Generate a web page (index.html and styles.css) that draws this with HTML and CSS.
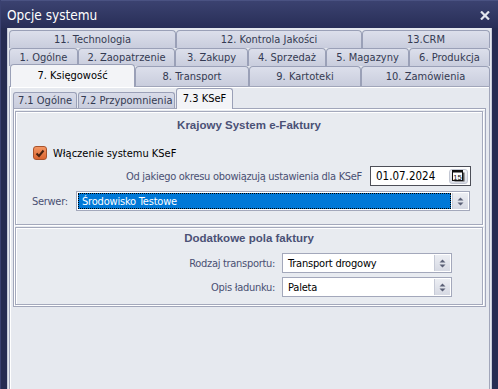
FILE: index.html
```html
<!DOCTYPE html>
<html lang="pl">
<head>
    <meta charset="UTF-8">
    <title>Opcje systemu</title>
    <link rel="stylesheet" href="styles.css">
</head>
<body>
    <div class="window">
        <div class="titlebar">
            <span class="title">Opcje systemu</span>
            <svg class="close" width="10" height="9" viewBox="0 0 10 9">
                <path d="M1 0.5 L9 8.5 M9 0.5 L1 8.5" stroke="#e2e5ee" stroke-width="2.2" />
            </svg>
        </div>

        <div class="client">
            <div class="tabrow row1">
                <div class="tab">11. Technologia</div>
                <div class="tab">12. Kontrola Jakości</div>
                <div class="tab">13.CRM</div>
            </div>
            <div class="tabrow row2">
                <div class="tab">1. Ogólne</div>
                <div class="tab">2. Zaopatrzenie</div>
                <div class="tab">3. Zakupy</div>
                <div class="tab">4. Sprzedaż</div>
                <div class="tab">5. Magazyny</div>
                <div class="tab">6. Produkcja</div>
            </div>
            <div class="tabrow row3">
                <div class="tab active">7. Księgowość</div>
                <div class="tab">8. Transport</div>
                <div class="tab">9. Kartoteki</div>
                <div class="tab">10. Zamówienia</div>
            </div>

            <div class="tabpage">
                <div class="subtabs">
                    <div class="subtab">7.1 Ogólne</div>
                    <div class="subtab">7.2 Przypomnienia</div>
                    <div class="subtab active">7.3 KSeF</div>
                </div>

                <div class="subpage">
                    <div class="group group-ksef">
                        <div class="group-title">Krajowy System e-Faktury</div>

                        <div class="check-row">
                            <span class="checkbox">
                                <svg width="10" height="9" viewBox="0 0 10 9">
                                    <path d="M1.5 4.5 L4 7 L8.5 1.5" fill="none" stroke="#4a2210" stroke-width="2" />
                                </svg>
                            </span>
                            <span>Włączenie systemu KSeF</span>
                        </div>

                        <div class="date-row">
                            <span class="label">Od jakiego okresu obowiązują ustawienia dla KSeF</span>
                            <div class="date-input">
                                <span class="date-value">01.07.2024</span>
                                <span class="cal-btn">
                                    <svg width="13" height="12" viewBox="0 0 13 12">
                                        <rect x="2.5" y="2.5" width="10" height="9" fill="#555" />
                                        <rect x="0.5" y="0.5" width="10" height="10" fill="#fff" stroke="#111" />
                                        <rect x="0.5" y="0.5" width="10" height="2" fill="#111" />
                                        <text x="5.5" y="9.6" font-size="7.5" font-family="Liberation Sans, sans-serif" text-anchor="middle" fill="#111">15</text>
                                    </svg>
                                </span>
                            </div>
                        </div>

                        <div class="server-row">
                            <span class="label">Serwer:</span>
                            <div class="combo focused">
                                <span class="value">Środowisko Testowe</span>
                                <span class="spin">
                                    <svg width="7" height="9" viewBox="0 0 7 9">
                                        <path d="M0.5 3.5 L3.5 0.5 L6.5 3.5 Z M0.5 5.5 L3.5 8.5 L6.5 5.5 Z" fill="#5a6076" />
                                    </svg>
                                </span>
                            </div>
                        </div>
                    </div>

                    <div class="group group-extra">
                        <div class="group-title">Dodatkowe pola faktury</div>
                        <div class="field-grid">
                            <span class="label">Rodzaj transportu:</span>
                            <div class="combo">
                                <span class="value">Transport drogowy</span>
                                <span class="spin">
                                    <svg width="7" height="9" viewBox="0 0 7 9">
                                        <path d="M0.5 3.5 L3.5 0.5 L6.5 3.5 Z M0.5 5.5 L3.5 8.5 L6.5 5.5 Z" fill="#5a6076" />
                                    </svg>
                                </span>
                            </div>
                            <span class="label">Opis ładunku:</span>
                            <div class="combo">
                                <span class="value">Paleta</span>
                                <span class="spin">
                                    <svg width="7" height="9" viewBox="0 0 7 9">
                                        <path d="M0.5 3.5 L3.5 0.5 L6.5 3.5 Z M0.5 5.5 L3.5 8.5 L6.5 5.5 Z" fill="#5a6076" />
                                    </svg>
                                </span>
                            </div>
                        </div>
                    </div>
                </div>
            </div>
        </div>
    </div>
</body>
</html>
```

FILE: styles.css
```css
body {
    margin: 0;
    width: 498px;
    height: 389px;
    overflow: hidden;
    background-color: #262c52;
    font-family: "DejaVu Sans Condensed", "DejaVu Sans", sans-serif;
    font-size: 11px;
    color: #000;
}
.window {
    height: 389px;
    display: flex;
    flex-direction: column;
    border-left: 1px solid #3a4170;
    box-sizing: border-box;
}
.titlebar {
    height: 28px;
    flex-shrink: 0;
    display: flex;
    align-items: center;
    justify-content: space-between;
    padding: 0 8px 0 6px;
    background: linear-gradient(#3b4270, #282e57);
    border-top: 1px solid #4a5282;
    box-sizing: border-box;
    color: #fff;
    font-size: 13.5px;
}
.close {
    margin-top: 1px;
}
.client {
    flex: 1;
    margin: 0 6px 0 6px;
    padding: 2px 1px 0 1px;
    background-color: #e5e8ee;
    border-left: 1px solid #c6cbda;
    border-right: 1px solid #c6cbda;
    display: flex;
    flex-direction: column;
    min-height: 0;
}

/* main tabs */
.tabrow {
    display: grid;
    height: 18px;
}
.row1 { grid-template-columns: 167px 186px 128px; }
.row2 { grid-template-columns: 69px 97px 73px 78px 83px 81px; }
.row3 { grid-template-columns: 126px 114px 112px 129px; height: 20px; }
.tab {
    border: 1px solid #9aa0b7;
    border-bottom: none;
    border-radius: 4px 4px 0 0;
    background: linear-gradient(#dcdfeb, #c9cddd);
    color: #343a52;
    text-align: center;
    line-height: 17px;
    white-space: nowrap;
    overflow: hidden;
}
.row3 .tab {
    line-height: 19px;
}
.row3 .tab.active {
    position: relative;
    z-index: 1;
    margin: -2px 0 -1px 1px;
    line-height: 22px;
    background: #f3f4f7;
    color: #000;
}
.tabpage {
    flex: 1;
    border: 1px solid #a1a6ba;
    border-bottom: none;
    box-shadow: inset 1px 1px 0 #fff;
    background-color: #e6e9ef;
    padding: 1px 3px 0 3px;
}

/* sub tabs */
.subtabs {
    display: flex;
    align-items: flex-end;
    height: 20px;
}
.subtab {
    height: 15px;
    line-height: 15px;
    margin-right: 1px;
    border: 1px solid #9aa0b7;
    border-bottom: none;
    border-radius: 3px 3px 0 0;
    background: linear-gradient(#d8dbe8, #c9cddd);
    color: #343a52;
    text-align: center;
    white-space: nowrap;
}
.subtab:nth-child(1) { width: 62px; }
.subtab:nth-child(2) { width: 95px; }
.subtab.active {
    position: relative;
    z-index: 1;
    width: 55px;
    height: 20px;
    line-height: 19px;
    margin-bottom: -1px;
    background: #f3f4f7;
    color: #000;
}
.subpage {
    border: 1px solid #a1a6ba;
    box-shadow: inset 1px 1px 0 #fff;
    background-color: #e8ebf0;
    padding: 2px 2px 1px 1px;
}

/* group boxes */
.group {
    border: 1px solid #a4a9bc;
    box-shadow: inset 1px 1px 0 #fff, 1px 1px 0 #fff;
    display: flex;
    flex-direction: column;
}
.group-title {
    height: 16px;
    line-height: 16px;
    text-align: center;
    font-family: "Liberation Sans", sans-serif;
    font-weight: bold;
    font-size: 11.5px;
    color: #4b5176;
}
.group-ksef {
    padding-bottom: 13px;
}
.group-ksef .group-title {
    margin-top: 5px;
}
.group-extra {
    margin-top: 2px;
    padding-bottom: 7px;
}
.group-extra .group-title {
    margin-top: 2px;
}
.label {
    color: #4a5073;
    letter-spacing: -0.3px;
}
.check-row {
    display: flex;
    align-items: center;
    gap: 6px;
    height: 16px;
    margin-top: 12px;
    padding-left: 17px;
}
.checkbox {
    width: 14px;
    height: 14px;
    box-sizing: border-box;
    border: 1px solid #a9532c;
    border-radius: 3px;
    background: linear-gradient(#f39663, #dc6530);
    display: flex;
    align-items: center;
    justify-content: center;
}
.date-row {
    display: flex;
    align-items: center;
    justify-content: flex-end;
    gap: 8px;
    margin-top: 5px;
    padding-right: 11px;
}
.date-input {
    width: 101px;
    height: 20px;
    box-sizing: border-box;
    border: 1px solid #4d4f58;
    background: #fff;
    display: flex;
    align-items: center;
    justify-content: space-between;
    padding: 0 2px 0 5px;
    font-size: 11.5px;
}
.cal-btn {
    width: 19px;
    height: 15px;
    border-radius: 3px;
    background: linear-gradient(#f4f5f8, #d9dce5);
    border: 1px solid #c3c7d3;
    box-sizing: border-box;
    display: flex;
    align-items: center;
    justify-content: center;
}
.server-row {
    display: flex;
    align-items: center;
    margin-top: 5px;
    padding: 0 12px 0 16px;
}
.server-row .label {
    width: 44px;
    flex-shrink: 0;
}
.combo {
    flex: 1;
    height: 20px;
    box-sizing: border-box;
    border: 1px solid #a3a8bb;
    background: #fff;
    display: flex;
    padding: 1px;
    letter-spacing: -0.2px;
}
.combo .value {
    flex: 1;
    line-height: 16px;
    padding-left: 3px;
    border: 1px solid transparent;
}
.combo.focused .value {
    background-color: #0078d7;
    color: #fff;
    border: 1px dotted #e07a1f;
    outline: 1px dotted #000;
    outline-offset: -1px;
    margin-right: 1px;
}
.spin {
    width: 15px;
    background: linear-gradient(#eceef3, #d6d9e3);
    border-left: 1px solid #c6cad6;
    display: flex;
    align-items: center;
    justify-content: center;
}
.field-grid {
    display: grid;
    grid-template-columns: 1fr 170px;
    column-gap: 7px;
    row-gap: 4px;
    align-items: center;
    margin-top: 7px;
    padding-right: 30px;
}
.field-grid .label {
    text-align: right;
}
```
